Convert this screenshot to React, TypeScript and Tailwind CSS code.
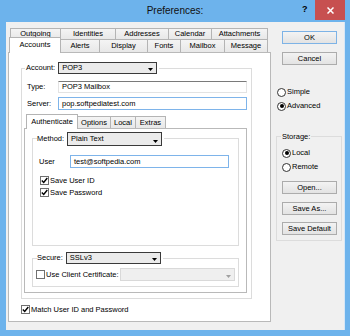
import type { ReactNode } from "react";

const Check = ({ checked }: { checked?: boolean }) => (
  <span className="flex h-[9px] w-[9px] shrink-0 items-center justify-center border border-[#707070] bg-white">
    {checked && (
      <svg width="7" height="7" viewBox="0 0 7 7">
        <path d="M0.8 3.6 L2.7 5.5 L6.3 1" fill="none" stroke="#000" strokeWidth="1.4" />
      </svg>
    )}
  </span>
);

const Radio = ({ on }: { on?: boolean }) => (
  <span className="flex h-[9px] w-[9px] shrink-0 items-center justify-center rounded-full border border-[#333] bg-white">
    {on && <span className="h-[4px] w-[4px] rounded-full bg-black" />}
  </span>
);

const Arrow = ({ color }: { color: string }) => (
  <svg width="5" height="3" viewBox="0 0 5 3" className="mb-[2px] mr-[3px] self-end">
    <path d="M0 0 L5 0 L2.5 3 Z" fill={color} />
  </svg>
);

function Combo({ value, className }: { value: string; className: string }) {
  return (
    <div className={`flex items-center justify-between border border-[#3a3a3a] bg-[#ebebeb] pl-[3px] ${className}`}>
      <span>{value}</span>
      <Arrow color="#000" />
    </div>
  );
}

function Button({ children, primary }: { children: ReactNode; primary?: boolean }) {
  return (
    <div
      className={`flex h-[13px] w-[55px] items-center justify-center border bg-gradient-to-b from-[#f3f3f3] to-[#e3e3e3] ${
        primary ? "border-[#7db3e6]" : "border-[#acacac]"
      }`}
    >
      {children}
    </div>
  );
}

function Tab({ label, className }: { label: string; className: string }) {
  return (
    <div
      className={`flex items-center justify-center border border-b-0 border-[#b4b4b4] bg-gradient-to-b from-[#f4f4f4] to-[#e8e8e8] ${className}`}
    >
      {label}
    </div>
  );
}

function SelTab({ label, className }: { label: string; className: string }) {
  return (
    <div
      className={`relative z-10 -mb-px flex items-start justify-center border border-b-0 border-[#b4b4b4] bg-white pt-[3px] ${className}`}
    >
      {label}
    </div>
  );
}

export default function App() {
  return (
    <div className="flex h-[336px] w-[350px] flex-col whitespace-nowrap bg-[#6db3ec] font-['Liberation_Sans',Arial,sans-serif] text-[7.5px] leading-none text-black">
      {/* title bar */}
      <div className="relative h-[22px] shrink-0">
        <div className="pt-[6px] text-center text-[10px] text-[#111]">Preferences:</div>
        <span className="absolute left-[302px] top-[5px] text-[9px] font-bold">?</span>
        <div className="absolute right-[5px] top-0 flex h-[20px] w-[30px] items-center justify-center bg-[#c75050]">
          <svg width="7" height="7" viewBox="0 0 7 7">
            <path d="M0.5 0.5 L6.5 6.5 M6.5 0.5 L0.5 6.5" stroke="#fff" strokeWidth="1.5" />
          </svg>
        </div>
      </div>

      {/* client area */}
      <div className="ml-[6px] flex h-[308px] w-[339px] border-r border-[#d6e7f7] bg-[#f0f0f0]">
        {/* tab control */}
        <div className="ml-[2px] mt-[6px] w-[263px]">
          <div className="ml-[2px] flex h-[11px]">
            <Tab label="Outgoing" className="w-[51px]" />
            <Tab label="Identities" className="-ml-px w-[56px]" />
            <Tab label="Addresses" className="-ml-px w-[54px]" />
            <Tab label="Calendar" className="-ml-px w-[44px]" />
            <Tab label="Attachments" className="-ml-px w-[57px]" />
          </div>
          <div className="-mt-[2px] ml-[1px] flex h-[15px] items-end">
            <SelTab label="Accounts" className="h-[16px] w-[52px]" />
            <Tab label="Alerts" className="-ml-px h-[13px] w-[40px]" />
            <Tab label="Display" className="-ml-px h-[13px] w-[49px]" />
            <Tab label="Fonts" className="-ml-px h-[13px] w-[34px]" />
            <Tab label="Mailbox" className="-ml-px h-[13px] w-[45px]" />
            <Tab label="Message" className="-ml-px h-[13px] w-[44px]" />
          </div>

          <div className="h-[270px] w-[263px] border border-[#b9b9b9] bg-white pl-[12px] pt-[15px]">
            {/* Account group */}
            <div className="relative h-[231px] w-[231px] border border-[#dcdcdc]">
              <div className="absolute -top-[7px] left-[3px] flex h-[12px] items-center gap-[3px] bg-white pl-px pr-[2px]">
                <span>Account:</span>
                <Combo value="POP3" className="h-[12px] w-[99px]" />
              </div>

              <div className="mt-[12px] flex h-[12px] items-center">
                <span className="w-[36px] pl-[5px]">Type:</span>
                <div className="flex h-[12px] w-[189px] items-center border border-[#e3e3e3] border-t-[#7a7a7a] pl-[3px]">
                  POP3 Mailbox
                </div>
              </div>
              <div className="mt-[4px] flex h-[13px] items-center">
                <span className="w-[36px] pl-[5px]">Server:</span>
                <div className="flex h-[13px] w-[189px] items-center border border-[#7eb4ea] pl-[3px]">
                  pop.softpediatest.com
                </div>
              </div>

              {/* inner tabs */}
              <div className="ml-[4px] mt-[4px] flex h-[14px] items-end">
                <SelTab label="Authenticate" className="h-[15px] w-[52px]" />
                <Tab label="Options" className="-ml-px h-[12px] w-[34px]" />
                <Tab label="Local" className="-ml-px h-[12px] w-[26px]" />
                <Tab label="Extras" className="-ml-px h-[12px] w-[31px]" />
              </div>
              <div className="ml-[2px] h-[165px] w-[223px] border border-[#b9b9b9] bg-white pl-[7px] pt-[9px]">
                {/* Method group */}
                <div className="relative h-[108px] w-[207px] border border-[#dcdcdc]">
                  <div className="absolute -top-[7px] left-[4px] flex h-[14px] items-center gap-[3px] bg-white pr-[2px]">
                    <span>Method:</span>
                    <Combo value="Plain Text" className="h-[14px] w-[95px]" />
                  </div>
                  <div className="mt-[16px] flex h-[13px] items-center">
                    <span className="w-[37px] pl-[6px]">User</span>
                    <div className="flex h-[13px] w-[159px] items-center border border-[#7eb4ea] pl-[3px]">
                      test@softpedia.com
                    </div>
                  </div>
                  <div className="ml-[7px] mt-[8px] flex h-[9px] items-center gap-px">
                    <Check checked />
                    <span>Save User ID</span>
                  </div>
                  <div className="ml-[7px] mt-[3px] flex h-[9px] items-center gap-px">
                    <Check checked />
                    <span>Save Password</span>
                  </div>
                </div>

                {/* Secure group */}
                <div className="relative mt-[12px] h-[29px] w-[207px] border border-[#dcdcdc]">
                  <div className="absolute -top-[7px] left-[4px] flex h-[12px] items-center gap-[3px] bg-white pr-[2px]">
                    <span>Secure:</span>
                    <Combo value="SSLv3" className="h-[12px] w-[95px]" />
                  </div>
                  <div className="ml-[3px] mt-[9px] flex h-[13px] w-[199px] items-center gap-px">
                    <Check />
                    <span>Use Client Certificate:</span>
                    <div className="flex h-[13px] flex-1 items-center justify-end border border-[#d9d9d9] bg-[#efefef]">
                      <Arrow color="#a0a0a0" />
                    </div>
                  </div>
                </div>
              </div>
            </div>

            <div className="mt-[6px] flex h-[9px] items-center gap-px">
              <Check checked />
              <span>Match User ID and Password</span>
            </div>
          </div>
        </div>

        {/* right column */}
        <div className="ml-[5px] w-[66px]">
          <div className="ml-[6px] mt-[9px]">
            <Button primary>OK</Button>
          </div>
          <div className="ml-[6px] mt-[8px]">
            <Button>Cancel</Button>
          </div>
          <div className="ml-px mt-[22px] flex h-[10px] items-center gap-px">
            <Radio />
            <span>Simple</span>
          </div>
          <div className="ml-px mt-[4px] flex h-[10px] items-center gap-px">
            <Radio on />
            <span>Advanced</span>
          </div>

          <div className="relative mt-[25px] h-[105px] w-[66px] border border-[#dcdcdc]">
            <span className="absolute -top-[4px] left-[4px] bg-[#f0f0f0] px-px">Storage:</span>
            <div className="ml-[5px] mt-[11px] flex h-[10px] items-center gap-px">
              <Radio on />
              <span>Local</span>
            </div>
            <div className="ml-[5px] mt-[4px] flex h-[10px] items-center gap-px">
              <Radio />
              <span>Remote</span>
            </div>
            <div className="ml-[5px] mt-[9px]">
              <Button>Open...</Button>
            </div>
            <div className="ml-[5px] mt-[8px]">
              <Button>Save As...</Button>
            </div>
            <div className="ml-[5px] mt-[7px]">
              <Button>Save Default</Button>
            </div>
          </div>
        </div>
      </div>
    </div>
  );
}
